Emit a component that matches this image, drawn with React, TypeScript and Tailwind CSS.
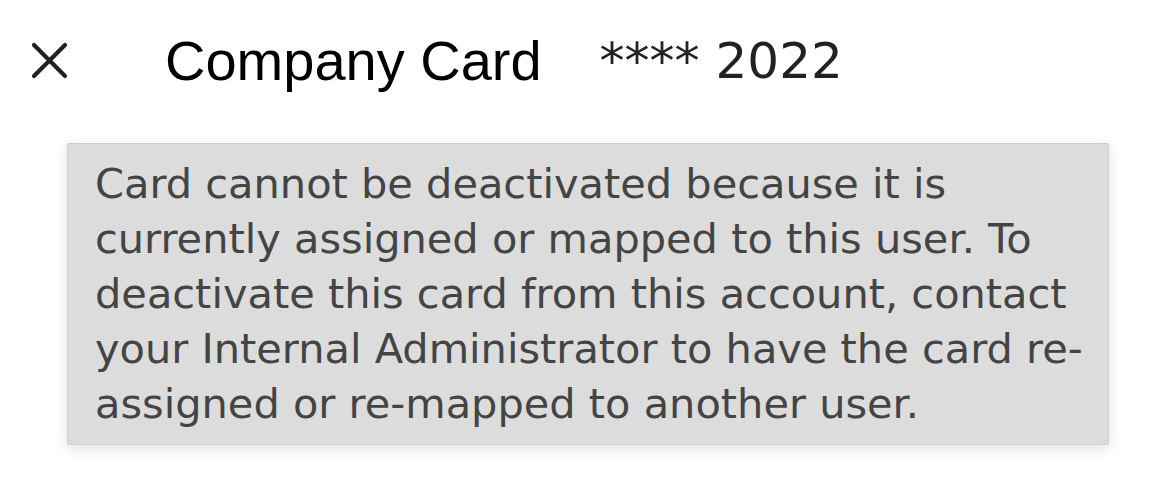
import React from 'react';

const CloseIcon = () => (
  <svg width="40" height="40" viewBox="0 0 40 40" fill="none" stroke="#1f2124" strokeWidth="4.2" strokeLinecap="round">
    <path d="M4 4 L35 35 M35 4 L4 35" />
  </svg>
);

const lines = [
  'Card cannot be deactivated because it is',
  'currently assigned or mapped to this user. To',
  'deactivate this card from this account, contact',
  'your Internal Administrator to have the card re-',
  'assigned or re-mapped to another user.',
];

export default function App() {
  return (
    <div className="w-[1170px] h-[502px] bg-white overflow-hidden">
      <div className="flex items-center h-[122px] pl-[30px]">
        <CloseIcon />
        <span className="ml-[95px] text-[56px] text-black font-['Liberation_Sans',Arial,sans-serif] leading-none">
          Company Card
        </span>
        <span className="ml-[58px] text-[50px] text-[#222] font-['DejaVu_Sans',sans-serif] leading-none">
          **** 2022
        </span>
      </div>
      <div className="ml-[67px] mt-[21px] w-[1042px] bg-[#dcdcdc] border border-[#cfcfcf] rounded-[2px] shadow-[0_4px_16px_rgba(0,0,0,0.12)] pl-[27px] pr-[20px] pt-[12px] pb-[13px]">
        <p className="text-[41.5px] leading-[55px] text-[#444] font-['DejaVu_Sans',sans-serif] whitespace-nowrap">
          {lines.map((l, i) => (
            <span key={i} className="block">{l}</span>
          ))}
        </p>
      </div>
    </div>
  );
}
